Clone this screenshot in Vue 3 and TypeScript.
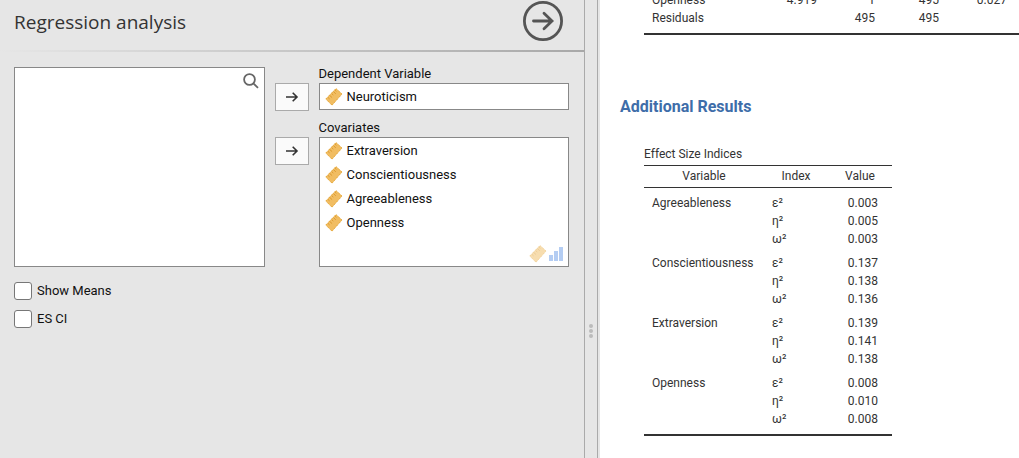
<script setup lang="ts">
import { ref } from 'vue'

interface EffectIndex {
  index: string
  value: string
}

interface EffectGroup {
  variable: string
  indices: EffectIndex[]
}

const symbols = ['ε²', 'η²', 'ω²']

function group(variable: string, values: string[]): EffectGroup {
  return {
    variable,
    indices: values.map((value, i) => ({ index: symbols[i], value })),
  }
}

const dependent = ref<string>('Neuroticism')
const covariates = ref<string[]>(['Extraversion', 'Conscientiousness', 'Agreeableness', 'Openness'])
const showMeans = ref(false)
const esCi = ref(false)

const anovaRows: string[][] = [
  ['Openness', '4.919', '1', '495', '0.027'],
  ['Residuals', '', '495', '495', ''],
]

const effectGroups: EffectGroup[] = [
  group('Agreeableness', ['0.003', '0.005', '0.003']),
  group('Conscientiousness', ['0.137', '0.138', '0.136']),
  group('Extraversion', ['0.139', '0.141', '0.138']),
  group('Openness', ['0.008', '0.010', '0.008']),
]
</script>

<template>
  <div class="app">
    <svg class="defs" aria-hidden="true">
      <symbol id="ruler" viewBox="0 0 18 18">
        <path d="M.8 11 11 .6 17 6 7 17.2Z" fill="#f1bd62" stroke="#e5a534" stroke-dasharray="1.4 .7" />
        <path d="M3 9.4l1.6 1.5M4.8 7.5l2.3 2.1M6.7 5.6l1.6 1.5M8.5 3.7l2.3 2.1M10 2.2l1.4 1.3" stroke="#d9962a" stroke-width=".9" fill="none" />
      </symbol>
      <symbol id="arrow" viewBox="0 0 14 14">
        <path d="M1 7h11M7.7 2.7 12 7l-4.3 4.3" fill="none" stroke="#333" stroke-width="1.6" />
      </symbol>
    </svg>

    <section class="options">
      <header class="header">
        <h1>Regression analysis</h1>
        <button class="close" type="button" aria-label="Close options">
          <svg viewBox="0 0 40 40">
            <circle cx="20" cy="20" r="18.6" />
            <path d="M10.5 20h18M21 12.3 29 20l-8 7.7" stroke-linecap="round" />
          </svg>
        </button>
      </header>

      <div class="assign">
        <div class="box supplier" role="listbox" aria-label="Available variables">
          <button class="search" type="button" aria-label="Search variables">
            <svg viewBox="0 0 16 16">
              <circle cx="6.5" cy="6.5" r="5.4" />
              <path d="m10.4 10.4 4.6 4.4" />
            </svg>
          </button>
        </div>

        <div class="moves">
          <button class="move" type="button" aria-label="Assign dependent variable">
            <svg><use href="#arrow" /></svg>
          </button>
          <button class="move" type="button" aria-label="Assign covariates">
            <svg><use href="#arrow" /></svg>
          </button>
        </div>

        <div class="targets">
          <h2 id="dep-label">Dependent Variable</h2>
          <ul class="box single" aria-labelledby="dep-label">
            <li><svg class="ruler"><use href="#ruler" /></svg>{{ dependent }}</li>
          </ul>
          <h2 id="cov-label">Covariates</h2>
          <div class="box multi">
            <ul aria-labelledby="cov-label">
              <li v-for="name in covariates" :key="name">
                <svg class="ruler"><use href="#ruler" /></svg>{{ name }}
              </li>
            </ul>
            <div class="permitted">
              <svg class="ruler"><use href="#ruler" /></svg>
              <svg class="bars" viewBox="0 0 14 14">
                <path d="M0 8h4v6H0zM5 4h4v10H5zM10 0h4v14h-4z" fill="#6b9de8" />
              </svg>
            </div>
          </div>
        </div>
      </div>

      <div class="checks">
        <label><input v-model="showMeans" type="checkbox" />Show Means</label>
        <label><input v-model="esCi" type="checkbox" />ES CI</label>
      </div>
    </section>

    <div class="splitter" role="separator" aria-orientation="vertical">
      <i></i><i></i><i></i>
    </div>

    <main class="results">
      <table class="anova">
        <tbody>
          <tr v-for="row in anovaRows" :key="row[0]">
            <td v-for="(cell, i) in row" :key="i">{{ cell }}</td>
          </tr>
        </tbody>
      </table>

      <h2>Additional Results</h2>

      <table class="effects">
        <caption>Effect Size Indices</caption>
        <thead>
          <tr>
            <th scope="col">Variable</th>
            <th scope="col">Index</th>
            <th scope="col">Value</th>
          </tr>
        </thead>
        <tbody v-for="g in effectGroups" :key="g.variable">
          <tr v-for="(item, i) in g.indices" :key="item.index">
            <td>{{ i === 0 ? g.variable : '' }}</td>
            <td>{{ item.index }}</td>
            <td>{{ item.value }}</td>
          </tr>
        </tbody>
      </table>
    </main>
  </div>
</template>

<style>
body {
  margin: 0;
}
</style>

<style scoped>
.app {
  display: flex;
  height: 100vh;
  overflow: hidden;
  background: #e6e6e6;
  font: 13px/18px Roboto, 'Noto Sans', sans-serif;
  color: #111;
}

.defs {
  position: absolute;
  width: 0;
  height: 0;
}

h1,
h2,
ul {
  margin: 0;
  padding: 0;
  font-weight: 400;
  list-style: none;
}

svg {
  display: block;
}

button {
  padding: 0;
  border: 0;
  background: none;
}

.options {
  flex: 584 1 0;
  min-width: 0;
}

.header {
  display: flex;
  justify-content: space-between;
  align-items: center;
  padding: 1px 21px 9px 14px;
  border-bottom: 2px solid;
  border-image: linear-gradient(to right, #e6e6e6, #a8a8a8) 1;
}

h1 {
  padding-top: 2px;
  font: 400 19px/28px 'Open Sans', 'Noto Sans', sans-serif;
  color: #333;
}

.close svg {
  width: 40px;
  height: 40px;
  fill: none;
  stroke: #555;
  stroke-width: 2.8;
}

.assign {
  display: grid;
  grid-template-columns: 1fr 34px 1fr;
  gap: 10px;
  padding: 15px 15px 0 14px;
}

.box {
  box-sizing: border-box;
  border: 1px solid #888;
  background: #fff;
}

.supplier {
  display: flex;
  justify-content: flex-end;
  align-items: flex-start;
  height: 200px;
  padding: 5px;
}

.search svg {
  width: 16px;
  height: 16px;
  fill: none;
  stroke: #666;
  stroke-width: 1.8;
}

.moves {
  display: flex;
  flex-direction: column;
  gap: 26px;
  padding-top: 16px;
}

.move {
  display: grid;
  place-items: center;
  box-sizing: border-box;
  height: 28px;
  border: 1px solid #aaa;
  background: #fafafa;
}

.move svg {
  width: 14px;
  height: 14px;
}

.targets {
  display: flex;
  flex-direction: column;
  height: 200px;
}

.targets h2 {
  font-size: 13px;
  line-height: 18px;
}

.targets h2:first-child {
  margin-top: -2px;
}

.single {
  margin-bottom: 9px;
}

.single,
.multi {
  padding: 1px 5px 0;
}

.single {
  height: 27px;
}

.multi {
  display: flex;
  flex-direction: column;
  justify-content: space-between;
  flex: 1;
}

li {
  display: flex;
  align-items: center;
  gap: 4px;
  height: 24px;
}

.ruler {
  width: 18px;
  height: 18px;
}

.permitted {
  display: flex;
  justify-content: flex-end;
  align-items: center;
  gap: 2px;
  padding-bottom: 3px;
  opacity: 0.5;
}

.bars {
  width: 14px;
  height: 14px;
}

.checks {
  display: flex;
  flex-direction: column;
  gap: 10px;
  padding: 15px 14px;
}

label {
  display: flex;
  align-items: center;
  gap: 5px;
  width: max-content;
}

input {
  appearance: none;
  box-sizing: border-box;
  width: 18px;
  height: 18px;
  margin: 0;
  border: 1px solid #777;
  border-radius: 3px;
  background: #fff;
}

input:checked {
  background: #3e6da9;
}

.splitter {
  display: flex;
  flex-direction: column;
  align-items: center;
  justify-content: flex-end;
  gap: 1px;
  box-sizing: border-box;
  width: 14px;
  margin-right: 2px;
  padding-bottom: 120px;
  border: solid #aaa;
  border-width: 0 1px;
}

.splitter i {
  width: 4px;
  height: 4px;
  border-radius: 2px;
  background: #bbb;
}

.results {
  flex: 399 1 0;
  min-width: 0;
  padding-left: 20px;
  overflow: hidden;
  background: #fff;
  font-size: 12px;
  color: #333;
}

.results h2 {
  margin: 60px 0 26px;
  font-size: 16px;
  font-weight: 700;
  line-height: 24px;
  color: #3e6da9;
}

table {
  margin-left: 24px;
  border-collapse: separate;
  border-spacing: 0;
  table-layout: fixed;
}

th,
td {
  padding: 0 8px;
  font-weight: 400;
  line-height: 18px;
  height: 18px;
  white-space: nowrap;
}

.anova {
  width: 395px;
  margin-top: -9px;
  border-bottom: 2px solid #333;
}

.anova td {
  text-align: right;
}

.anova td:first-child {
  width: 94px;
  text-align: left;
}

.anova td:nth-child(2) {
  width: 55px;
}

.anova td:nth-child(3) {
  width: 42px;
}

.anova td:nth-child(4) {
  width: 48px;
}

.anova td:nth-child(5) {
  width: 52px;
}

/* An empty last cell takes the slack so that the others keep their widths. */
.anova tr::after {
  content: '';
  display: table-cell;
}

.anova tr:last-child td {
  padding-bottom: 6px;
}

.effects {
  width: 248px;
  border-bottom: 2px solid #333;
}

caption {
  padding-bottom: 2px;
  text-align: left;
}

th {
  width: 48px;
  padding: 1px 8px 2px;
  border: solid #333;
  border-width: 1px 0;
}

th:first-child {
  width: 104px;
}

.effects td {
  text-align: left;
}

.effects td:last-child {
  padding-right: 14px;
  text-align: right;
}

.effects tbody tr:first-child td {
  padding-top: 6px;
}

.effects tbody:last-child tr:last-child td {
  padding-bottom: 6px;
}
</style>
